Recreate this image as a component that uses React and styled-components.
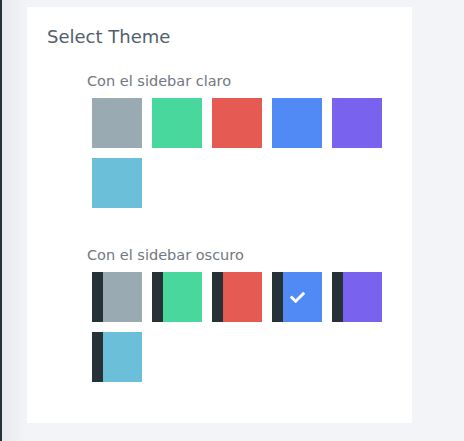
import React from 'react';
import styled, { createGlobalStyle } from 'styled-components';
import { FaCheck } from 'react-icons/fa';

const GlobalStyle = createGlobalStyle`
  html, body {
    margin: 0;
    padding: 0;
    background: #f3f4f8;
    font-family: "DejaVu Sans", "Noto Sans", sans-serif;
  }
`;

const Page = styled.div`
  display: flex;
  min-height: 441px;
`;

const SidebarEdge = styled.div`
  width: 2px;
  background: #263238;
`;

const Main = styled.div`
  flex: 1;
  padding: 7px 0 0 25px;
  background: linear-gradient(to right, #e8eaee 0px, #f3f4f8 25px);
`;

const Card = styled.div`
  width: 385px;
  box-sizing: border-box;
  background: #fff;
  padding: 19px 20px 36px 20px;
`;

const Title = styled.h5`
  margin: 0;
  font-size: 18px;
  line-height: 22px;
  font-weight: 400;
  color: #52606a;
`;

const Section = styled.div`
  margin-left: 40px;
  margin-top: ${(p) => p.$top}px;
`;

const Label = styled.p`
  margin: 0;
  font-size: 14.5px;
  line-height: 20px;
  color: #70787f;
`;

const Swatches = styled.div`
  display: flex;
  flex-wrap: wrap;
  width: 300px;
  margin-top: 2px;
`;

const Swatch = styled.div`
  width: 50px;
  height: 50px;
  margin: 5px;
  background: ${(p) =>
    p.$dark ? `linear-gradient(to right, #263238 11px, ${p.$color} 11px)` : p.$color};
  display: flex;
  align-items: center;
  justify-content: center;
  color: #fff;
  cursor: pointer;
`;

const colors = ['#9aaab3', '#48d89d', '#e55a53', '#518af5', '#7862ee', '#6bbfd8'];

export default function App() {
  return (
    <>
      <GlobalStyle />
      <Page>
        <SidebarEdge />
        <Main>
          <Card>
            <Title>Select Theme</Title>
            <Section $top={23}>
              <Label>Con el sidebar claro</Label>
              <Swatches>
                {colors.map((c) => (
                  <Swatch key={c} $color={c} />
                ))}
              </Swatches>
            </Section>
            <Section $top={32}>
              <Label>Con el sidebar oscuro</Label>
              <Swatches>
                {colors.map((c, i) => (
                  <Swatch key={c} $color={c} $dark>
                    {i === 3 && <FaCheck size={15} />}
                  </Swatch>
                ))}
              </Swatches>
            </Section>
          </Card>
        </Main>
      </Page>
    </>
  );
}
